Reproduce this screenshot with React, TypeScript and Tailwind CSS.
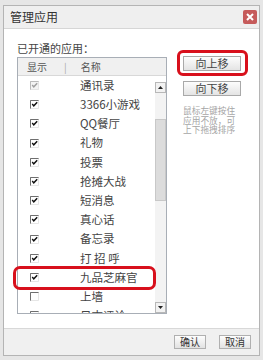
import React from "react";

const font = { fontFamily: '"Noto Sans CJK SC", "Liberation Sans", sans-serif' };

const apps: { name: string; state: "disabled" | "on" | "off" }[] = [
  { name: "通讯录", state: "disabled" },
  { name: "3366小游戏", state: "on" },
  { name: "QQ餐厅", state: "on" },
  { name: "礼物", state: "on" },
  { name: "投票", state: "on" },
  { name: "抢摊大战", state: "on" },
  { name: "短消息", state: "on" },
  { name: "真心话", state: "on" },
  { name: "备忘录", state: "on" },
  { name: "打 招 呼", state: "on" },
  { name: "九品芝麻官", state: "on" },
  { name: "上墙", state: "off" },
  { name: "日志评论", state: "off" },
];

function Check({ state }: { state: "disabled" | "on" | "off" }) {
  const dim = state === "disabled";
  return (
    <svg width="9" height="9" viewBox="0 0 10 10" className="shrink-0">
      <rect x="0" y="0" width="10" height="10" fill={dim ? "#f4f4f4" : "#fff"} />
      <path d="M0.5 10 V0.5 H10" fill="none" stroke={dim ? "#b0b0b0" : "#555"} strokeWidth="1" />
      <path d="M9.5 0.5 V9.5 H0.5" fill="none" stroke="#e2e2e2" strokeWidth="1" />
      {state !== "off" && (
        <path d="M2.5 4.5 L4.2 6.5 L8 2.5" fill="none" stroke={dim ? "#a0a0a0" : "#111"} strokeWidth="1.6" />
      )}
    </svg>
  );
}

function Arrow({ up }: { up?: boolean }) {
  return (
    <div className="flex h-[11px] w-[11px] items-center justify-center border border-[#b8b8b8] bg-[#f2f2f2]">
      <svg width="5" height="3" viewBox="0 0 5 3">
        <path d={up ? "M0 3 L2.5 0 L5 3 Z" : "M0 0 L2.5 3 L5 0 Z"} fill="#222" />
      </svg>
    </div>
  );
}

function Btn({ children }: { children: React.ReactNode }) {
  return (
    <div className="flex h-[15px] w-[58px] items-center justify-center border border-[#a9a9a9] bg-gradient-to-b from-[#fdfdfd] to-[#e4e4e4] text-[11px] leading-none text-[#444]">
      {children}
    </div>
  );
}

export default function App() {
  return (
    <div className="relative h-[360px] w-[263px] bg-[#e6e6e6] px-[3px] pb-[4px] pt-[5px]" style={font}>
      <div className="flex h-full flex-col border border-[#b4b4b4] bg-white">
        <div className="flex h-[23px] items-center justify-between border-b border-[#d6d6d6] bg-[#efefef] pl-[6px] pr-[2px]">
          <span className="text-[12px] leading-none text-[#333]">管理应用</span>
          <div className="flex h-[14px] w-[14px] items-center justify-center rounded-[2px] bg-[#c65b5b]">
            <svg width="8" height="8" viewBox="0 0 8 8">
              <path d="M1 1 L7 7 M7 1 L1 7" stroke="#fff" strokeWidth="2" />
            </svg>
          </div>
        </div>

        <div className="flex flex-1 gap-[16px] pl-[13px] pt-[13px]">
          <div className="flex flex-col">
            <div className="h-[12px] text-[11px] leading-[12px] text-[#444]">已开通的应用：</div>
            <div className="mt-[3px] flex h-[257px] w-[150px] flex-col overflow-hidden border border-[#a8aeb6]">
              <div className="flex h-[18px] shrink-0 items-center border-b border-[#d8d8d8] bg-[#f0f0f0] text-[10px] leading-none text-[#555]">
                <span className="pl-[9px]">显示</span>
                <span className="pl-[17px] text-[#aaa]">|</span>
                <span className="pl-[14px]">名称</span>
              </div>
              <div className="flex flex-1 overflow-hidden">
                <div className="flex-1 overflow-hidden">
                  {apps.map((a) => (
                    <div key={a.name} className="flex h-[19.2px] items-center">
                      <div className="flex w-[62px] items-center pl-[12px]">
                        <Check state={a.state} />
                      </div>
                      <span className="text-[11.5px] leading-none text-[#444]">{a.name}</span>
                    </div>
                  ))}
                </div>
                <div className="flex w-[11px] flex-col pt-[6px]">
                  <Arrow up />
                  <div className="flex flex-1 flex-col bg-[#f3f3f3]">
                    <div className="mt-[26px] h-[82px] border border-[#c8c8c8] bg-[#dcdcdc]" />
                  </div>
                  <Arrow />
                </div>
              </div>
            </div>
          </div>

          <div className="flex flex-col pt-[14px]">
            <Btn>向上移</Btn>
            <div className="mt-[10px]">
              <Btn>向下移</Btn>
            </div>
            <div className="mt-[10px] text-[8.7px] leading-[9.6px] text-[#a5a5a5]">
              <div>鼠标左键按住</div>
              <div>应用不放，可</div>
              <div>上下拖拽排序</div>
            </div>
          </div>
        </div>

        <div className="flex h-[27px] items-center justify-end gap-[13px] border-t border-[#d8d8d8] bg-[#f0f0f0] pr-[8px]">
          <div className="flex h-[14px] w-[32px] items-center justify-center border border-[#b0b0b0] bg-gradient-to-b from-[#fdfdfd] to-[#e2e2e2] text-[10px] leading-none text-[#333]">确认</div>
          <div className="flex h-[14px] w-[32px] items-center justify-center border border-[#b0b0b0] bg-gradient-to-b from-[#fdfdfd] to-[#e2e2e2] text-[10px] leading-none text-[#333]">取消</div>
        </div>
      </div>

      <div className="absolute left-[177px] top-[50px] h-[26px] w-[71px] rounded-[6px] border-[3px] border-[#d8101c]" />
      <div className="absolute left-[13px] top-[266px] h-[24px] w-[143px] rounded-[7px] border-[3px] border-[#d8101c]" />
    </div>
  );
}
